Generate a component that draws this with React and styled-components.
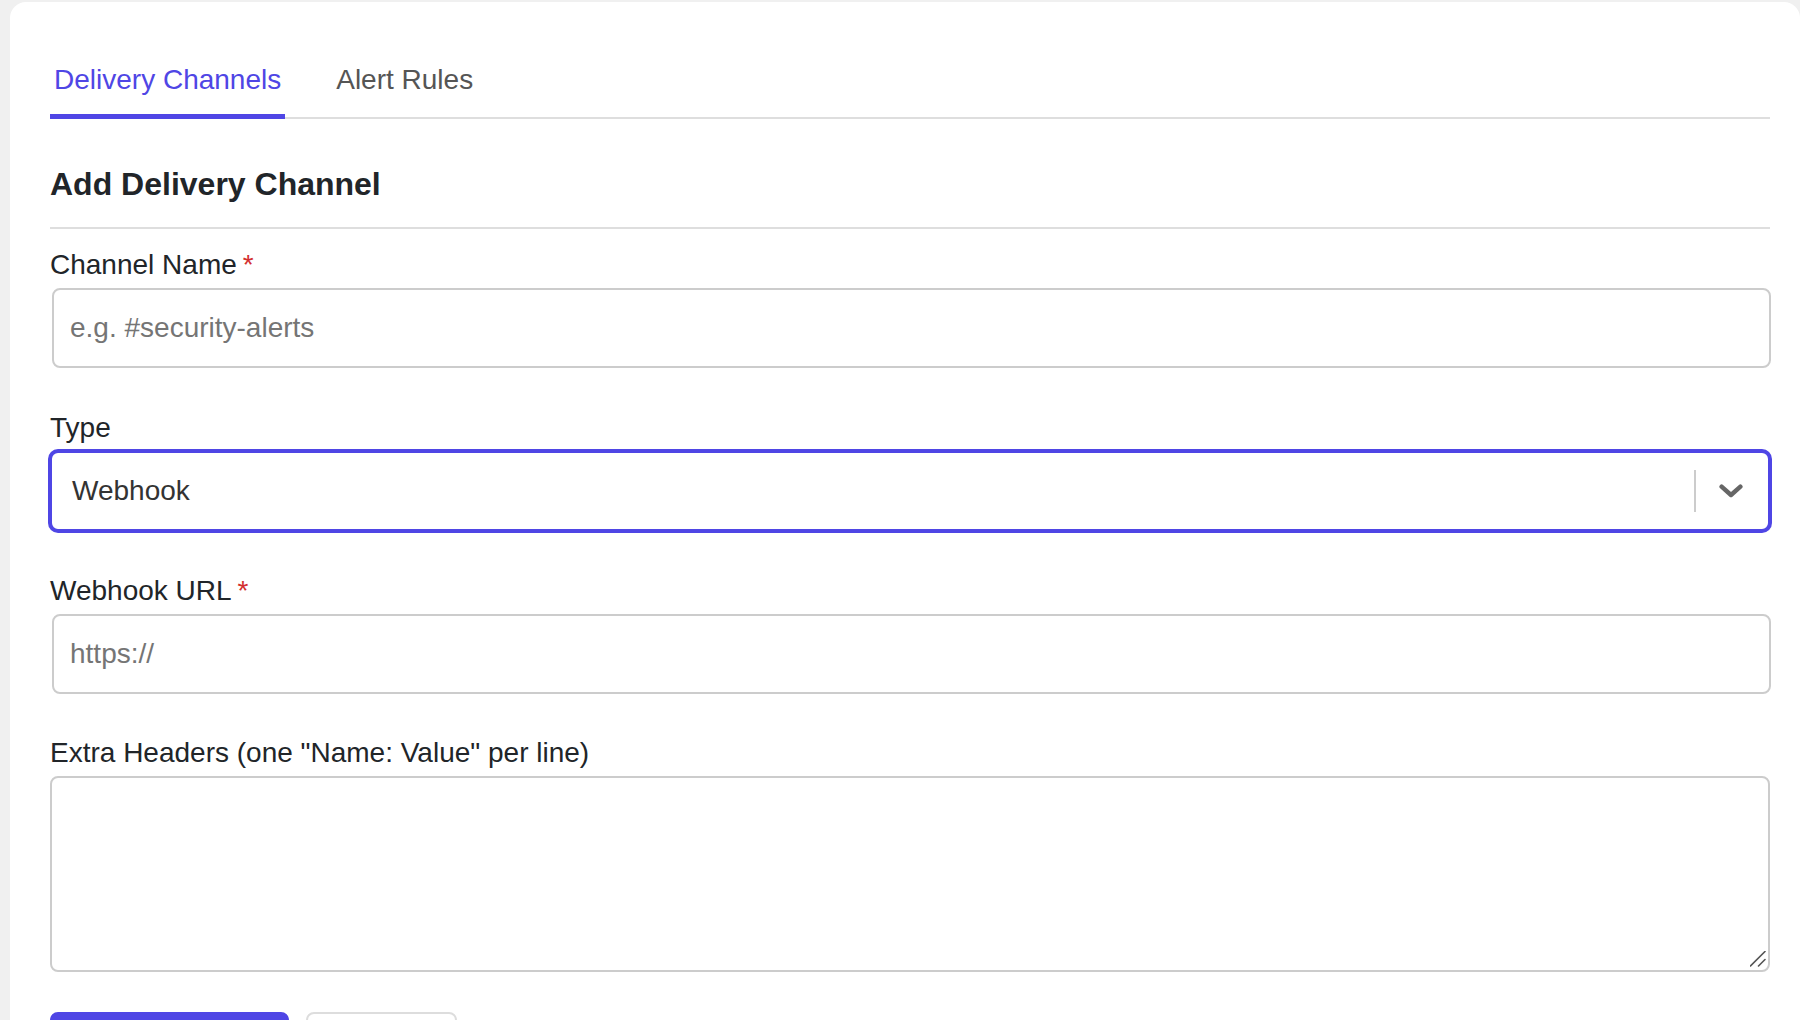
import React, { useState } from 'react';
import styled, { createGlobalStyle } from 'styled-components';

const GlobalStyle = createGlobalStyle`
  html, body {
    margin: 0;
    background: #f0f0f0;
    font-family: "Liberation Sans", Arial, Helvetica, sans-serif;
  }
  * { box-sizing: border-box; }
`;

const Page = styled.div`
  padding: 2px 0 0 10px;
`;

const Card = styled.div`
  background: #ffffff;
  border-radius: 16px;
  padding: 40px 30px 40px 40px;
`;

const TabList = styled.div`
  display: flex;
  gap: 47px;
  border-bottom: 2px solid #dedede;
`;

const Tab = styled.button`
  background: none;
  border: none;
  border-bottom: 5px solid ${p => (p.$active ? '#4f46e5' : 'transparent')};
  margin-bottom: -2px;
  padding: 22px 4px 18px;
  font-family: inherit;
  font-size: 28px;
  line-height: 32px;
  color: ${p => (p.$active ? '#4f46e5' : '#555555')};
  cursor: pointer;
`;

const SectionTitle = styled.h2`
  margin: 46px 0 0;
  padding-bottom: 24px;
  border-bottom: 2px solid #dedede;
  font-size: 32px;
  line-height: 38px;
  font-weight: 700;
  color: #212529;
`;

const Form = styled.form`
  padding-top: 20px;
`;

const Field = styled.div`
  margin-bottom: ${p => p.$gap || '44px'};
`;

const Label = styled.label`
  display: block;
  margin-bottom: 7px;
  font-size: 28px;
  line-height: 32px;
  color: #212529;
`;

const Required = styled.span`
  margin-left: 6px;
  color: #d32f2f;
`;

const TextInput = styled.input`
  display: block;
  width: calc(100% - 1px);
  margin-left: 2px;
  height: 80px;
  padding: 0 16px;
  border: 2px solid #cccccc;
  border-radius: 8px;
  font-family: inherit;
  font-size: 28px;
  color: #333333;
  outline: none;

  &::placeholder {
    color: #757575;
  }
`;

const SelectBox = styled.div`
  display: flex;
  align-items: center;
  height: 80px;
  margin-top: 1px;
  border: 2px solid #4f46e5;
  box-shadow: 0 0 0 2px #4f46e5;
  border-radius: 8px;
  background: #fff;
  cursor: pointer;
`;

const SelectValue = styled.div`
  flex: 1;
  padding-left: 20px;
  font-size: 28px;
  color: #333333;
`;

const Separator = styled.span`
  align-self: stretch;
  width: 2px;
  margin: 17px 0;
  background: #cccccc;
`;

const Indicator = styled.div`
  display: flex;
  align-items: center;
  padding: 0 25px 0 23px;
  color: #666666;
`;

const AreaWrap = styled.div`
  position: relative;
`;

const TextArea = styled.textarea`
  display: block;
  width: 100%;
  height: 196px;
  padding: 16px;
  border: 2px solid #cccccc;
  border-radius: 8px;
  font-family: inherit;
  font-size: 28px;
  color: #333333;
  resize: none;
  outline: none;
`;

const Grip = styled.svg`
  position: absolute;
  right: 4px;
  bottom: 5px;
  pointer-events: none;
`;

const ButtonRow = styled.div`
  display: flex;
  gap: 17px;
`;

const Button = styled.button`
  width: ${p => (p.$variant === 'primary' ? '239px' : '151px')};
  height: 62px;
  border-radius: 8px;
  border: 2px solid ${p => (p.$variant === 'primary' ? '#4f46e5' : '#dddddd')};
  background: ${p => (p.$variant === 'primary' ? '#4f46e5' : '#ffffff')};
  color: ${p => (p.$variant === 'primary' ? '#ffffff' : '#333333')};
  font-family: inherit;
  font-size: 28px;
  font-weight: ${p => (p.$variant === 'primary' ? 700 : 400)};
  cursor: pointer;
`;

const Chevron = () => (
  <svg width="24" height="14" viewBox="0 0 24 14" fill="none">
    <path
      d="M2.6 2.6 L12 11 L21.4 2.6"
      stroke="currentColor"
      strokeWidth="4.4"
      strokeLinecap="round"
      strokeLinejoin="round"
    />
  </svg>
);

const App = () => {
  const [tab, setTab] = useState('channels');

  return (
    <Page>
      <GlobalStyle />
      <Card>
        <TabList>
          <Tab $active={tab === 'channels'} onClick={() => setTab('channels')}>
            Delivery Channels
          </Tab>
          <Tab $active={tab === 'rules'} onClick={() => setTab('rules')}>
            Alert Rules
          </Tab>
        </TabList>

        <SectionTitle>Add Delivery Channel</SectionTitle>

        <Form onSubmit={e => e.preventDefault()}>
          <Field>
            <Label>
              Channel Name<Required>*</Required>
            </Label>
            <TextInput placeholder="e.g. #security-alerts" />
          </Field>

          <Field>
            <Label>Type</Label>
            <SelectBox>
              <SelectValue>Webhook</SelectValue>
              <Separator />
              <Indicator>
                <Chevron />
              </Indicator>
            </SelectBox>
          </Field>

          <Field $gap="43px">
            <Label>
              Webhook URL<Required>*</Required>
            </Label>
            <TextInput placeholder="https://" />
          </Field>

          <Field $gap="40px">
            <Label>Extra Headers (one "Name: Value" per line)</Label>
            <AreaWrap>
              <TextArea />
              <Grip width="16" height="16" viewBox="0 0 16 16">
                <path d="M0.5 15 L15 0.5 M8.5 15 L15 8.5" stroke="#555" strokeWidth="1.6" strokeLinecap="round" />
              </Grip>
            </AreaWrap>
          </Field>

          <ButtonRow>
            <Button $variant="primary" type="submit">Add Channel</Button>
            <Button type="button">Cancel</Button>
          </ButtonRow>
        </Form>
      </Card>
    </Page>
  );
};

export default App;
